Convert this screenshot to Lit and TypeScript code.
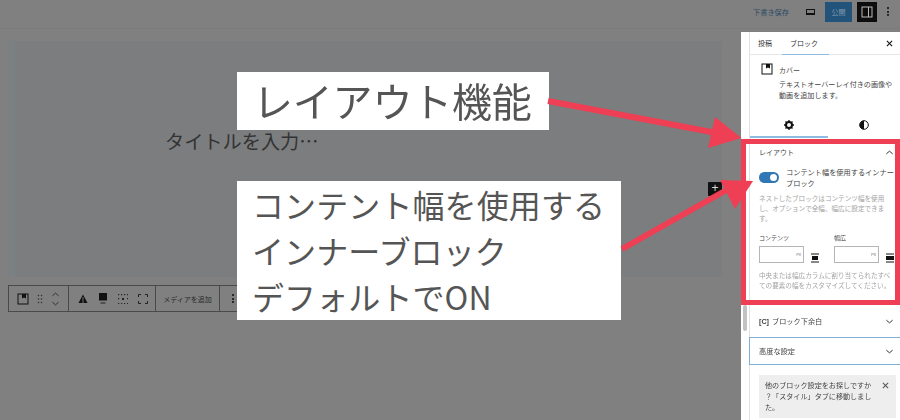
import { LitElement, html, css, svg } from "lit";
import { customElement } from "lit/decorators.js";

const chevUp = svg`<svg class="chev" width="9" height="9" viewBox="0 0 10 10"><path d="M1.5 6.5 5 3.5l3.5 3" fill="none" stroke="#333" stroke-width="1.1"/></svg>`;
const chevDown = svg`<svg class="chev" width="9" height="9" viewBox="0 0 10 10"><path d="M1.5 3.5 5 6.5l3.5-3" fill="none" stroke="#333" stroke-width="1.1"/></svg>`;
const close = (c: string) => svg`<svg width="7" height="7" viewBox="0 0 8 8"><path d="M1 1l6 6M7 1 1 7" stroke="${c}" stroke-width="1.2"/></svg>`;
const coverIcon = (c: string) => svg`<svg width="12" height="12" viewBox="0 0 12 12"><rect x="1" y="1" width="10" height="10" fill="none" stroke="${c}" stroke-width="1"/><path d="M5 1h4v4.5L7 4.5 5 5.5z" fill="${c}"/></svg>`;
const widthIcon = (wide: boolean) => svg`<svg width="8" height="10" viewBox="0 0 8 10">
  <path d="M0 1h8M0 9h8" stroke="#111" stroke-width="1"/>
  <rect x="${wide ? 0 : 1}" y="3" width="${wide ? 8 : 6}" height="4" fill="#111"/></svg>`;

@customElement("app-root")
export class AppRoot extends LitElement {
  static styles = css`
    :host { display: block; position: relative; width: 900px; height: 420px; overflow: hidden; background: #808080;
      font-family: "Noto Sans CJK JP", "Liberation Sans", sans-serif; color: #222; }
    .soft { filter: blur(0.45px); }
    .top { height: 29px; box-sizing: border-box; display: flex; align-items: center; justify-content: flex-end; padding: 0 0 5px; background: #808080; border-bottom: 1px solid #7b7b7b; }
    .top-inner { display: flex; align-items: center; }
    .save { font-size: 7.2px; color: #2b4a66; margin-right: 17px; white-space: nowrap; }
    .device { width: 9px; height: 6px; border: 1px solid #111; border-bottom-width: 2px; box-sizing: border-box; margin-right: 10px; }
    .publish { width: 27px; height: 20px; background: #22537a; color: #7f97ad; font-size: 7px; display: flex; align-items: center; justify-content: center; margin-right: 5px; }
    .toggle-side { width: 20px; height: 20px; background: #0d0d0d; display: flex; align-items: center; justify-content: center; margin-right: 10px; }
    .dots { display: flex; flex-direction: column; gap: 1.5px; margin-right: 11px; }
    .dots i { width: 2px; height: 2px; background: #2a2a2a; display: block; }
    .body { display: grid; grid-template-columns: 741px 159px; height: 391px; }
    .editor { background: #808080; padding: 12px 19px 0 8px; box-sizing: border-box; }
    .cover { height: 236px; background: #7b7d7f; border-left: 7px solid #7b8083; display: flex; flex-direction: column; justify-content: center; position: relative; box-sizing: border-box; }
    .title { font-size: 19.2px; color: #333; margin: 0 0 36px 150px; line-height: 28px; white-space: nowrap; }
    .plus { position: absolute; right: 0; top: 141px; width: 14px; height: 14px; background: #111; color: #ddd; font-size: 12px; line-height: 13px; text-align: center; border-radius: 1px; font-family: "Liberation Sans", sans-serif; }
    .toolbar { display: flex; width: 240px; height: 27px; margin-top: 8px; border: 1px solid #4a4a4a; box-sizing: border-box; }
    .tb-group { display: flex; align-items: center; border-right: 1px solid #4a4a4a; padding: 0 0 0 8px; gap: 8px; box-sizing: border-box; }
    .tb-group.g1 { width: 60px; }
    .tb-group.g2 { width: 87px; padding-left: 9px; gap: 10px; }
    .tb-group.g3 { width: 64px; justify-content: center; padding: 0; font-size: 7px; color: #2a2a2a; white-space: nowrap; }
    .tb-group.g4 { border: 0; padding-left: 12px; }
    .updown { display: flex; flex-direction: column; gap: 0; }
    .sidebar { background: #fff; display: grid; grid-template-columns: 8px 1fr; margin-top: 3px; }
    .gutter { position: relative; }
    .thumb { position: absolute; left: 2px; top: 273px; width: 4px; height: 26px; border-radius: 2px; background: #c2c2c2; }
    .panel { border-left: 1px solid #e2e2e2; min-width: 0; font-size: 7.2px; }
    .tabs { height: 23px; display: flex; align-items: center; padding: 0 7px 0 8px; border-bottom: 1px solid #e6e6e6; position: relative; box-sizing: border-box; font-size: 7px; }
    .tab { margin-right: 18px; color: #333; }
    .tabs svg { margin-left: auto; }
    .tab-line { position: absolute; left: 32px; bottom: -1px; width: 47px; height: 1.5px; background: #8fbbe0; }
    .card { display: grid; grid-template-columns: 12px 1fr; gap: 0 6px; align-content: start; padding: 8px 0 0 11px; height: 58px; box-sizing: border-box; }
    .card .name { font-size: 7px; line-height: 14px; color: #444; }
    .card .desc { font-size: 7.1px; line-height: 10.5px; color: #444; grid-column: 2; margin-top: 2px; white-space: nowrap; }
    .sub { height: 25px; display: grid; grid-template-columns: 78px 1fr; position: relative; box-sizing: border-box; }
    .sub div { display: flex; align-items: center; justify-content: center; padding-bottom: 1px; }
    .sub-line { position: absolute; left: 0; bottom: 0; width: 78px; height: 2px; background: #8fbbe0; }
    .layout { padding: 0 6px 0 9px; height: 167px; box-sizing: border-box; }
    .row { display: flex; align-items: center; justify-content: space-between; }
    .layout-head { height: 28px; font-size: 7px; color: #444; box-sizing: border-box; }
    .switch { display: grid; grid-template-columns: 20px 1fr; gap: 7px; align-items: center; font-size: 7.2px; line-height: 10.5px; color: #444; margin-top: 1px; white-space: nowrap; }
    .knob { width: 20px; height: 11px; border-radius: 6px; background: #2f77b5; display: flex; justify-content: flex-end; align-items: center; padding: 0 2px; box-sizing: border-box; }
    .knob i { width: 7px; height: 7px; border-radius: 50%; background: #fff; display: block; }
    .help { font-size: 6.6px; line-height: 10.2px; color: #a3a3a3; margin: 5px 0 0; white-space: nowrap; }
    .dims { display: grid; grid-template-columns: 75px 75px; margin-top: 9px; }
    .dim label { display: block; font-size: 6px; line-height: 10px; color: #444; margin-bottom: 3px; }
    .dim-row { display: flex; align-items: flex-end; gap: 7px; }
    .input { width: 45px; height: 17px; border: 1px solid #b5b5b5; box-sizing: border-box; display: flex; align-items: center; justify-content: flex-end; padding-right: 2px; font-size: 4px; color: #777; }
    .foot { margin-top: 7px; }
    .acc { height: 32px; display: flex; align-items: center; justify-content: space-between; padding: 0 6px 0 9px; font-size: 7.2px; color: #444; box-sizing: border-box; }
    .acc b { font-family: "Liberation Sans", sans-serif; margin-right: 3px; }
    .acc.adv { height: 28px; border: 1px solid #7fb0d8; border-right: 0; margin-left: -1px; padding-left: 9px; }
    .notice { margin: 10px 4px 0 9px; background: #eee; height: 43px; padding: 5px 6px; display: grid; grid-template-columns: 1fr 8px; font-size: 7.1px; line-height: 11.2px; color: #444; box-sizing: border-box; white-space: nowrap; }
    .notice svg { margin-top: 2px; }
    .frame { position: absolute; left: 741px; top: 139px; width: 159px; height: 166px; border: 5px solid #ef3f55; box-sizing: border-box; }
    .label { position: absolute; background: #fff; color: #555; white-space: nowrap; }
    .l1 { left: 237px; top: 72px; width: 312px; height: 58px; font-size: 40px; line-height: 57px; padding-left: 16px; box-sizing: border-box; letter-spacing: -0.2px; }
    .l2 { left: 237px; top: 181px; width: 384px; height: 139px; font-size: 32px; line-height: 46px; padding-left: 15px; box-sizing: border-box; letter-spacing: 0.1px; }
    .arrows { position: absolute; left: 0; top: 0; }
  `;

  render() {
    return html`
      <div class="soft">
        <div class="top">
          <div class="top-inner">
            <span class="save">下書き保存</span>
            <span class="device"></span>
            <span class="publish">公開</span>
            <span class="toggle-side"><svg width="12" height="12" viewBox="0 0 12 12"><rect x="1" y="1" width="10" height="10" fill="none" stroke="#bbb"/><path d="M7.5 1v10" stroke="#bbb"/></svg></span>
            <span class="dots"><i></i><i></i><i></i></span>
          </div>
        </div>
        <div class="body">
          <div class="editor">
            <div class="cover">
              <div class="title">タイトルを入力…</div>
              <div class="plus">+</div>
            </div>
            <div class="toolbar">
              <div class="tb-group g1">
                ${coverIcon("#111")}
                <svg width="6" height="10" viewBox="0 0 6 10" fill="#333"><circle cx="1.5" cy="1.5" r=".8"/><circle cx="4.5" cy="1.5" r=".8"/><circle cx="1.5" cy="5" r=".8"/><circle cx="4.5" cy="5" r=".8"/><circle cx="1.5" cy="8.5" r=".8"/><circle cx="4.5" cy="8.5" r=".8"/></svg>
                <span class="updown">${chevUp}${chevDown}</span>
              </div>
              <div class="tb-group g2">
                <svg width="10" height="10" viewBox="0 0 10 10"><path d="M5 0.5 9.5 9h-9z" fill="#111"/><path d="M5 3v6" stroke="#888" stroke-width=".8"/></svg>
                <svg width="10" height="11" viewBox="0 0 10 11"><rect x="1" y="0" width="8" height="7.5" fill="#111"/><path d="M2.5 10h5" stroke="#222"/></svg>
                <svg width="10" height="10" viewBox="0 0 10 10" fill="#222"><rect x="4" y="4" width="2" height="2"/><rect x="0" y="0" width="1.2" height="1.2"/><rect x="3" y="0" width="1.2" height="1.2"/><rect x="6" y="0" width="1.2" height="1.2"/><rect x="9" y="0" width="1.2" height="1.2"/><rect x="0" y="4" width="1.2" height="1.2"/><rect x="9" y="4" width="1.2" height="1.2"/><rect x="0" y="9" width="1.2" height="1.2"/><rect x="3" y="9" width="1.2" height="1.2"/><rect x="6" y="9" width="1.2" height="1.2"/><rect x="9" y="9" width="1.2" height="1.2"/></svg>
                <svg width="10" height="10" viewBox="0 0 10 10" fill="none" stroke="#222"><path d="M.5 3V.5H3M7 .5h2.5V3M9.5 7v2.5H7M3 9.5H.5V7"/></svg>
              </div>
              <div class="tb-group g3">メディアを追加</div>
              <div class="tb-group g4"><span class="dots"><i></i><i></i><i></i></span></div>
            </div>
          </div>
          <div class="sidebar">
            <div class="gutter"><div class="thumb"></div></div>
            <div class="panel">
              <div class="tabs">
                <span class="tab">投稿</span><span class="tab">ブロック</span>${close("#111")}
                <span class="tab-line"></span>
              </div>
              <div class="card">
                ${coverIcon("#111")}
                <div class="name">カバー</div>
                <div class="desc">テキストオーバーレイ付きの画像や<br />動画を追加します。</div>
              </div>
              <div class="sub">
                <div><svg width="10" height="10" viewBox="0 0 10 10"><circle cx="5" cy="5" r="3" fill="none" stroke="#111" stroke-width="2"/><path d="M5 0v10M0 5h10M1.5 1.5l7 7M8.5 1.5l-7 7" stroke="#111" stroke-width="1.3" stroke-dasharray="2 6"/></svg></div>
                <div><svg width="10" height="10" viewBox="0 0 10 10"><circle cx="5" cy="5" r="4.3" fill="#fff" stroke="#111"/><path d="M5 .7a4.3 4.3 0 0 0 0 8.6z" fill="#111"/></svg></div>
                <span class="sub-line"></span>
              </div>
              <div class="layout">
                <div class="row layout-head"><span>レイアウト</span>${chevUp}</div>
                <div class="switch">
                  <div class="knob"><i></i></div>
                  <div>コンテント幅を使用するインナー<br />ブロック</div>
                </div>
                <p class="help">ネストしたブロックはコンテンツ幅を使用<br />し、オプションで全幅、幅広に設定できま<br />す。</p>
                <div class="dims">
                  <div class="dim"><label>コンテンツ</label><div class="dim-row"><span class="input">PX</span>${widthIcon(false)}</div></div>
                  <div class="dim"><label>幅広</label><div class="dim-row"><span class="input">PX</span>${widthIcon(true)}</div></div>
                </div>
                <p class="help foot">中央または幅広カラムに割り当てられたすべ<br />ての要素の幅をカスタマイズしてください。</p>
              </div>
              <div class="acc"><span><b>[C]</b>ブロック下余白</span>${chevDown}</div>
              <div class="acc adv"><span>高度な設定</span>${chevDown}</div>
              <div class="notice">
                <div>他のブロック設定をお探しですか<br />？「スタイル」タブに移動しまし<br />た。</div>
                ${close("#555")}
              </div>
            </div>
          </div>
        </div>
      </div>
      <div class="frame"></div>
      <div class="label l1">レイアウト機能</div>
      <div class="label l2">コンテント幅を使用する<br />インナーブロック<br />デフォルトでON</div>
      <svg class="arrows" width="900" height="420" viewBox="0 0 900 420">
        <path d="M548 101 722 134" stroke="#ef3f55" stroke-width="6" fill="none"/>
        <path d="M715 117 741.5 138 708 148z" fill="#ef3f55"/>
        <path d="M622 249 730 188" stroke="#ef3f55" stroke-width="6" fill="none"/>
        <path d="M720 180 753 181 735 209z" fill="#ef3f55"/>
      </svg>
    `;
  }
}
